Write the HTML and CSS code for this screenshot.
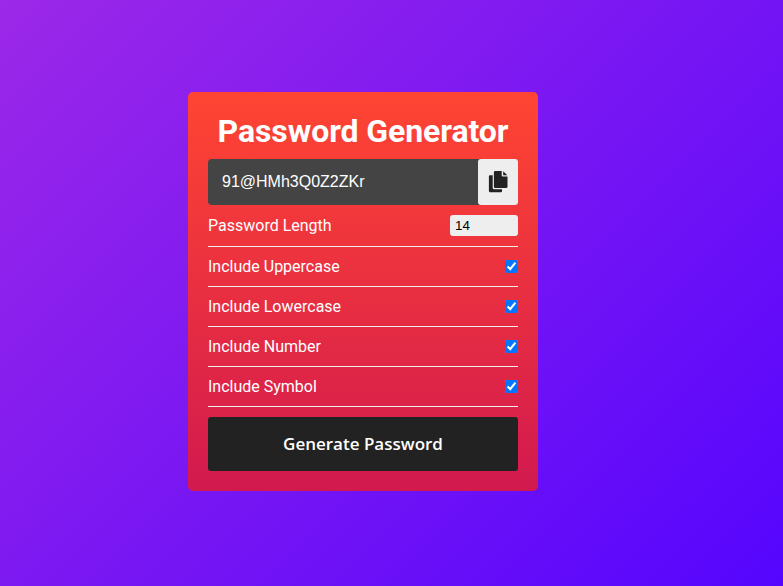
FILE: index.html
```html
<!DOCTYPE html>
<html lang="en">
<head>
  <meta charset="UTF-8">
  <title>Password Generator</title>
  <link rel="stylesheet" href="styles.css">
</head>
<body>
  <main class="card">
    <h1 class="title">Password Generator</h1>
    <div class="result">
      <span class="password">91@HMh3Q0Z2ZKr</span>
      <button class="copy" aria-label="Copy">
        <svg class="copy-icon" viewBox="0 0 20 22">
          <path d="M7.200 0H13.700V4.200A1.200 1.200 0 0 0 14.900 5.400H19.500V15.700A1.300 1.300 0 0 1 18.200 17H7.200A1.300 1.300 0 0 1 5.900 15.700V1.300A1.300 1.300 0 0 1 7.200 0zM15.200 0.200 19.300 4.200H15.200z"/>
          <path d="M2 4.300H4.700V16.700A1.600 1.600 0 0 0 6.300 18.300H14V20.200A1 1 0 0 1 13 21.200H2A1.200 1.200 0 0 1 0.900 20V5.500A1.200 1.200 0 0 1 2 4.300z"/>
        </svg>
      </button>
    </div>
    <div class="row row-length">
      <label for="length">Password Length</label>
      <input class="length" id="length" type="number" value="14">
    </div>
    <div class="row"><label for="upper">Include Uppercase</label><input class="check" id="upper" type="checkbox" checked></div>
    <div class="row"><label for="lower">Include Lowercase</label><input class="check" id="lower" type="checkbox" checked></div>
    <div class="row"><label for="number">Include Number</label><input class="check" id="number" type="checkbox" checked></div>
    <div class="row"><label for="symbol">Include Symbol</label><input class="check" id="symbol" type="checkbox" checked></div>
    <button class="generate">Generate Password</button>
  </main>
</body>
</html>
```
FILE: styles.css
```css
* {
  box-sizing: border-box;
  margin: 0;
}

body {
  height: 586px;
  padding: 92px 0 0 188px;
  overflow: hidden;
  background: linear-gradient(135deg, #9c28e8, #5505fe);
  color: #fff;
  font-family: Roboto, sans-serif;
}

.card {
  width: 350px;
  height: 399px;
  padding: 20px;
  border-radius: 5px;
  background: linear-gradient(#ff4532, #d2194f);
}

.title {
  height: 37px;
  margin-bottom: 10px;
  font-size: 32px;
  line-height: 38px;
  font-weight: 700;
  letter-spacing: -0.08px;
  text-align: center;
  white-space: nowrap;
}

.result {
  display: flex;
  align-items: center;
  justify-content: space-between;
  height: 46px;
  padding-left: 14px;
  border-radius: 4px;
  background: #444;
}

.password {
  font: 16px "Liberation Sans", sans-serif;
}

.copy {
  display: flex;
  align-items: center;
  justify-content: center;
  width: 40px;
  height: 46px;
  padding: 0;
  border: 0;
  border-radius: 3px;
  background: #eee;
}

.copy-icon {
  width: 20px;
  height: 22px;
  fill: #222;
}

.row {
  display: flex;
  align-items: center;
  justify-content: space-between;
  height: 40px;
  border-bottom: 1px solid #eee;
  font-size: 16px;
}

.row-length {
  height: 42px;
}

.length {
  width: 68px;
  height: 21px;
  padding: 0 5px;
  border: 0;
  border-radius: 3px;
  background: #eee;
  color: #000;
  font: 13.333px "Liberation Sans", sans-serif;
  appearance: textfield;
}

.check {
  width: 13px;
  height: 13px;
}

.generate {
  width: 100%;
  height: 54px;
  margin-top: 10px;
  padding: 0 0 2px;
  border: 0;
  border-radius: 3px;
  background: #222;
  color: #fff;
  font: 600 17px "Open Sans", sans-serif;
}
```
